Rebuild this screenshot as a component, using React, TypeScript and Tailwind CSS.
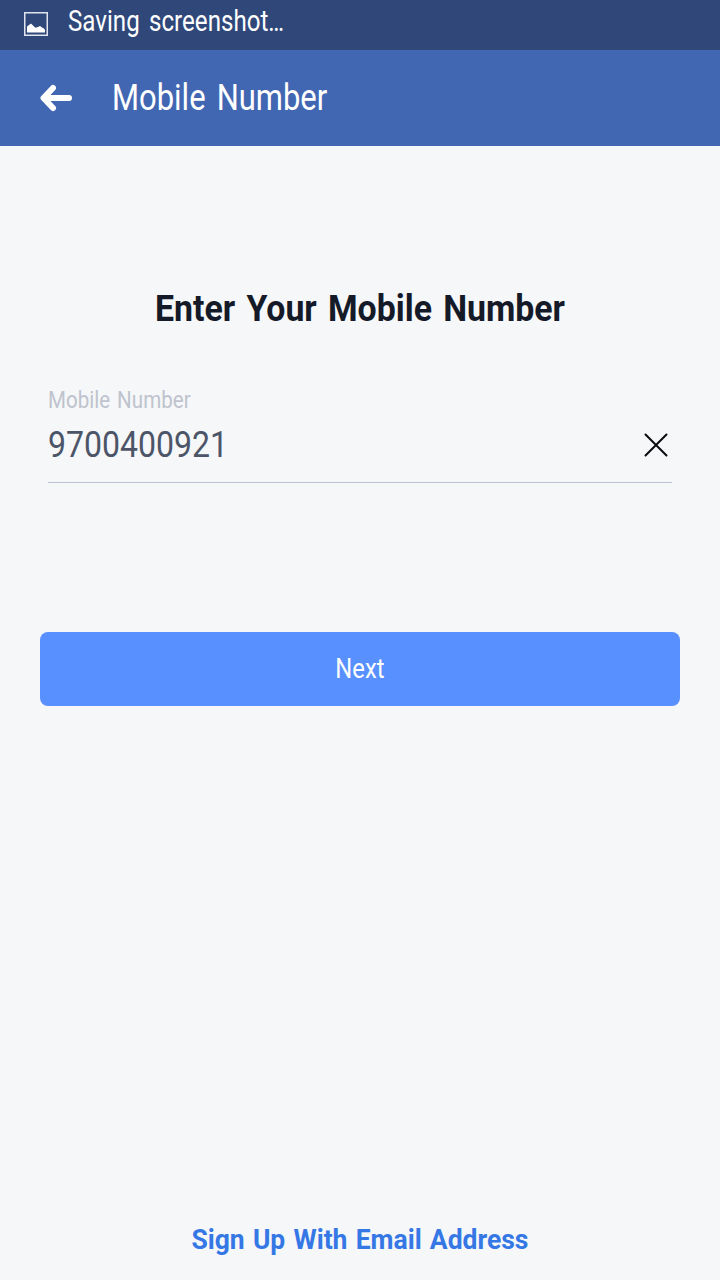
export default function App() {
  return (
    <div className="flex h-[1280px] w-[720px] flex-col overflow-hidden bg-[#f5f7f9] font-['Roboto','Liberation_Sans',sans-serif] whitespace-nowrap">
      <div className="flex h-[50px] shrink-0 items-start bg-[#30477a] pl-6 text-white">
        <svg className="mt-3 mr-5 size-6 shrink-0" viewBox="0 0 24 24" fill="none">
          <rect x="0.75" y="0.75" width="22.5" height="22.5" stroke="#dfe4ef" strokeWidth="1.5" />
          <path d="M3 20.5V14.5L5 13L7 11.5L9.5 14L11.5 15.8L14 15L16 14L18 15.5L20 16.5L21 18V20.5Z" fill="white" />
        </svg>
        <span className="mt-[5px] origin-left scale-x-[0.832] text-[29px] leading-8 [word-spacing:4px]">Saving screenshot<span className="tracking-[-1.9px]">...</span></span>
      </div>
      <header className="flex h-24 shrink-0 items-center bg-[#4267b2] pl-10 text-white">
        <svg className="mr-10 size-8 shrink-0" viewBox="0 0 32 32" fill="none" stroke="white" strokeWidth="6" strokeLinecap="round" strokeLinejoin="round">
          <path d="M29 16H5M13 6L3.5 16L13 26" />
        </svg>
        <h1 className="origin-left scale-x-[0.86] text-[36px] leading-10 [word-spacing:4px]">Mobile Number</h1>
      </header>
      <main className="flex flex-1 flex-col items-center">
        <h2 className="mt-[143px] scale-x-[0.94] text-[36px] leading-10 font-bold text-[#151a28] [word-spacing:3px]">Enter Your Mobile Number</h2>
        <div className="mt-[58px] flex h-[96px] w-[624px] flex-col items-start border-b border-[#bcc2d0]">
          <label htmlFor="mobile" className="origin-left scale-x-[0.895] text-[23px] leading-[28px] text-[#bfc3cd] [word-spacing:2px]">Mobile Number</label>
          <div className="mt-[9px] flex w-full items-center justify-between pr-1">
            <span id="mobile" className="origin-left scale-x-[0.865] text-[37px] leading-[42px] text-[#4c5568]">9700400921</span>
            <svg className="size-6" viewBox="0 0 24 24" fill="none" stroke="#090b10" strokeWidth="2" strokeLinecap="round">
              <path d="M1.5 1.5L22.5 22.5M22.5 1.5L1.5 22.5" />
            </svg>
          </div>
        </div>
        <button className="mt-[149px] flex h-[74px] w-[640px] items-center justify-center rounded-lg bg-[#5890ff] text-white">
          <span className="scale-x-[0.85] text-[28px] leading-8">Next</span>
        </button>
        <a href="#" className="mt-auto mb-6 scale-x-[0.98] text-[27px] leading-8 font-bold text-[#3578e5] [word-spacing:1.7px]">Sign Up With Email Address</a>
      </main>
    </div>
  );
}
